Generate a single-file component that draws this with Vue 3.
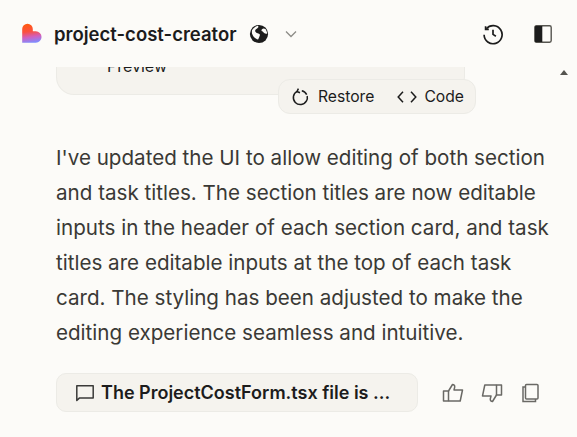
<template>
  <div class="app">
    <header class="top">
      <svg class="logo" width="21" height="21" viewBox="0 0 21 21">
        <defs>
          <linearGradient id="lg" x1="0.35" y1="0" x2="0.5" y2="1">
            <stop offset="0" stop-color="#ff5a10" />
            <stop offset="0.4" stop-color="#fb5040" />
            <stop offset="0.7" stop-color="#d060c0" />
            <stop offset="1" stop-color="#7f8cff" />
          </linearGradient>
        </defs>
        <path d="M6.500 .8a5.300 5.300 0 0 1 5.300 5.300v2.100h3a4.900 4.900 0 0 1 0 11.500H1.200V6.100A5.300 5.300 0 0 1 6.500 .8z" fill="url(#lg)" />
      </svg>
      <span class="name">project-cost-creator</span>
      <svg class="globe" width="20" height="20" viewBox="0 0 20 20">
        <circle cx="10" cy="10" r="9.100" fill="#1c1c1c" />
        <path d="M3 6.200C4.600 3.700 6.600 2.200 8.800 1.800c1.200.900.500 1.900-.700 2.600-1.500.800-2.300 2-1.800 3.200.5 1.200 2.100 1.800 3.600 2.100 1.100.3 1.100 1.200.8 2.100-.5 1.300-1 2.500-1.600 3.800-2.600-.5-5-2.800-6-5.800-.3-1.300-.2-2.500-.100-3.600z" fill="#fcfbf8" />
        <path d="M12.800 5.400c1-1 2.500-1 3.700-.3.800 1.300 1.500 2.900 1.700 4.400-1 .4-2.300.2-3.100-.5-.7-.6-1.100-1.400-2-1.700-.700-.5-.800-1.300-.300-1.900z" fill="#fcfbf8" />
      </svg>
      <svg class="chev" width="14" height="14" viewBox="0 0 14 14">
        <path d="M2 4.500l5 5 5-5" fill="none" stroke="#8d8c88" stroke-width="1.300" />
      </svg>
      <div class="spacer"></div>
      <svg class="hist" width="22" height="22" viewBox="0 0 22 22" fill="none" stroke="#1c1c1c" stroke-width="1.700">
        <path d="M4.300 5.800A9 9 0 1 1 2.100 11.800" />
        <path d="M3.600 3.200v3.200h3.200" />
        <path d="M11 6.800v4.600l2.900 1.800" />
      </svg>
      <svg class="panel" width="18" height="18" viewBox="0 0 18 18">
        <rect x="0.800" y="0.800" width="16.400" height="16.400" rx="1.600" fill="#fcfbf8" stroke="#55544f" stroke-width="1.400" />
        <path d="M1.600 1h6.700v16H1.600A.6.6 0 0 1 1 16.400V1.600A.6.6 0 0 1 1.600 1z" fill="#1c1c1c" />
      </svg>
    </header>
    <main class="chat">
      <div class="versionWrap">
        <div class="version"><span class="prev">Preview</span></div>
        <div class="tools">
          <span class="tool restore">
            <svg width="18" height="18" viewBox="0 0 18 18" fill="none" stroke="#1c1c1c" stroke-width="1.500">
              <path d="M6.200 3.300a7 7 0 1 0 4.600-.6" stroke-dasharray="31 1.500" />
              <path d="M7.400 .6L6 3.500l3 1.300" />
            </svg>
            Restore
          </span>
          <span class="tool">
            <svg width="20" height="14" viewBox="0 0 20 14" fill="none" stroke="#1c1c1c" stroke-width="1.500">
              <path d="M6 1.800L1.200 7 6 12.200" />
              <path d="M14 1.800L18.800 7 14 12.200" />
            </svg>
            Code
          </span>
        </div>
      </div>
      <p class="msg">I've updated the UI to allow editing of both section and task titles. The section titles are now editable inputs in the header of each section card, and task titles are editable inputs at the top of each task card. The styling has been adjusted to make the editing experience seamless and intuitive.</p>
      <div class="foot">
        <div class="file">
          <svg width="20" height="20" viewBox="0 0 20 20" fill="none" stroke="#3a3a38" stroke-width="1.500">
            <path d="M1.800 17.500V2.700h16.400v12.400H4.300z" stroke-linejoin="round" />
          </svg>
          <span>The ProjectCostForm.tsx file is ...</span>
        </div>
        <div class="acts">
          <svg width="22" height="20" viewBox="0 0 22 20" fill="none" stroke="#6a6965" stroke-width="1.500" stroke-linejoin="round">
            <path d="M1.500 8h5v10h-5z" />
            <path d="M6.500 8l4-6.500c1.600 0 2.400 1.200 2.200 2.600L12 7h8.500l-2.300 11H6.500" />
          </svg>
          <svg width="22" height="20" viewBox="0 0 22 20" fill="none" stroke="#6a6965" stroke-width="1.500" stroke-linejoin="round">
            <path d="M20.500 12h-5V2h5z" />
            <path d="M15.500 12l-4 6.500c-1.600 0-2.400-1.200-2.200-2.600l.7-2.900H1.500L3.800 2h11.700" />
          </svg>
          <svg width="20" height="20" viewBox="0 0 20 20" fill="none" stroke="#6a6965" stroke-width="1.500">
            <rect x="5.500" y="1.500" width="12.500" height="14.500" rx="1" />
            <path d="M5.500 4H3v14.500h12.500V16" />
          </svg>
        </div>
      </div>
      <div class="arrow"></div>
    </main>
  </div>
</template>

<script setup>
</script>

<style>
html, body { margin: 0; background: #fcfbf8; }
</style>

<style scoped>
.app {
  width: 577px;
  height: 437px;
  overflow: hidden;
  background: #fcfbf8;
  font-family: Inter, "Liberation Sans", sans-serif;
  color: #1c1c1c;
  display: flex;
  flex-direction: column;
}
.top {
  height: 67px;
  flex: none;
  display: flex;
  align-items: center;
  padding: 0 25px 0 21px;
  box-sizing: border-box;
}
.logo { margin-right: 12px; }
.name { font-size: 18.500px; font-weight: 600; }
.globe { margin-left: 12px; }
.chev { margin-left: 15px; }
.spacer { flex: 1; }
.hist { margin-right: 30px; }
.chat {
  position: relative;
  flex: 1;
  overflow: hidden;
  padding: 0 21px 0 56px;
}
.versionWrap {
  position: relative;
  display: flow-root;
  width: 420px;
  height: 47px;
}
.version {
  width: 409px;
  height: 46px;
  margin-top: -18px;
  box-sizing: border-box;
  background: #f5f3ee;
  border: 1px solid #ecebe6;
  border-top: none;
  border-radius: 0 0 18px 18px;
  padding: 6px 0 0 50px;
  font-size: 16px;
  line-height: 22px;
}
.tools {
  position: absolute;
  right: 0;
  top: 12px;
  height: 35px;
  box-sizing: border-box;
  display: flex;
  align-items: center;
  gap: 23px;
  padding: 0 11px 0 12px;
  background: #f5f3ee;
  border: 1px solid #ecebe6;
  border-radius: 12px;
  font-size: 15.700px;
}
.tool { display: flex; align-items: center; gap: 7px; }
.restore { gap: 9px; }
.msg {
  margin: 26px 0 0;
  width: 500px;
  font-size: 20.600px;
  line-height: 35px;
  color: #3a3935;
}
.foot { display: flex; align-items: center; margin-top: 23px; }
.file {
  width: 362px;
  height: 39px;
  box-sizing: border-box;
  display: flex;
  align-items: center;
  gap: 6px;
  padding-left: 18px;
  background: #f5f3ee;
  border: 1px solid #ecebe6;
  border-radius: 10px;
  font-size: 18px;
  font-weight: 600;
}
.acts { display: flex; gap: 17px; align-items: center; margin-left: 24px; }
.arrow {
  position: absolute;
  right: 9px;
  top: 3px;
  width: 0;
  height: 0;
  border-left: 4px solid transparent;
  border-right: 4px solid transparent;
  border-bottom: 5px solid #55544f;
}
</style>
